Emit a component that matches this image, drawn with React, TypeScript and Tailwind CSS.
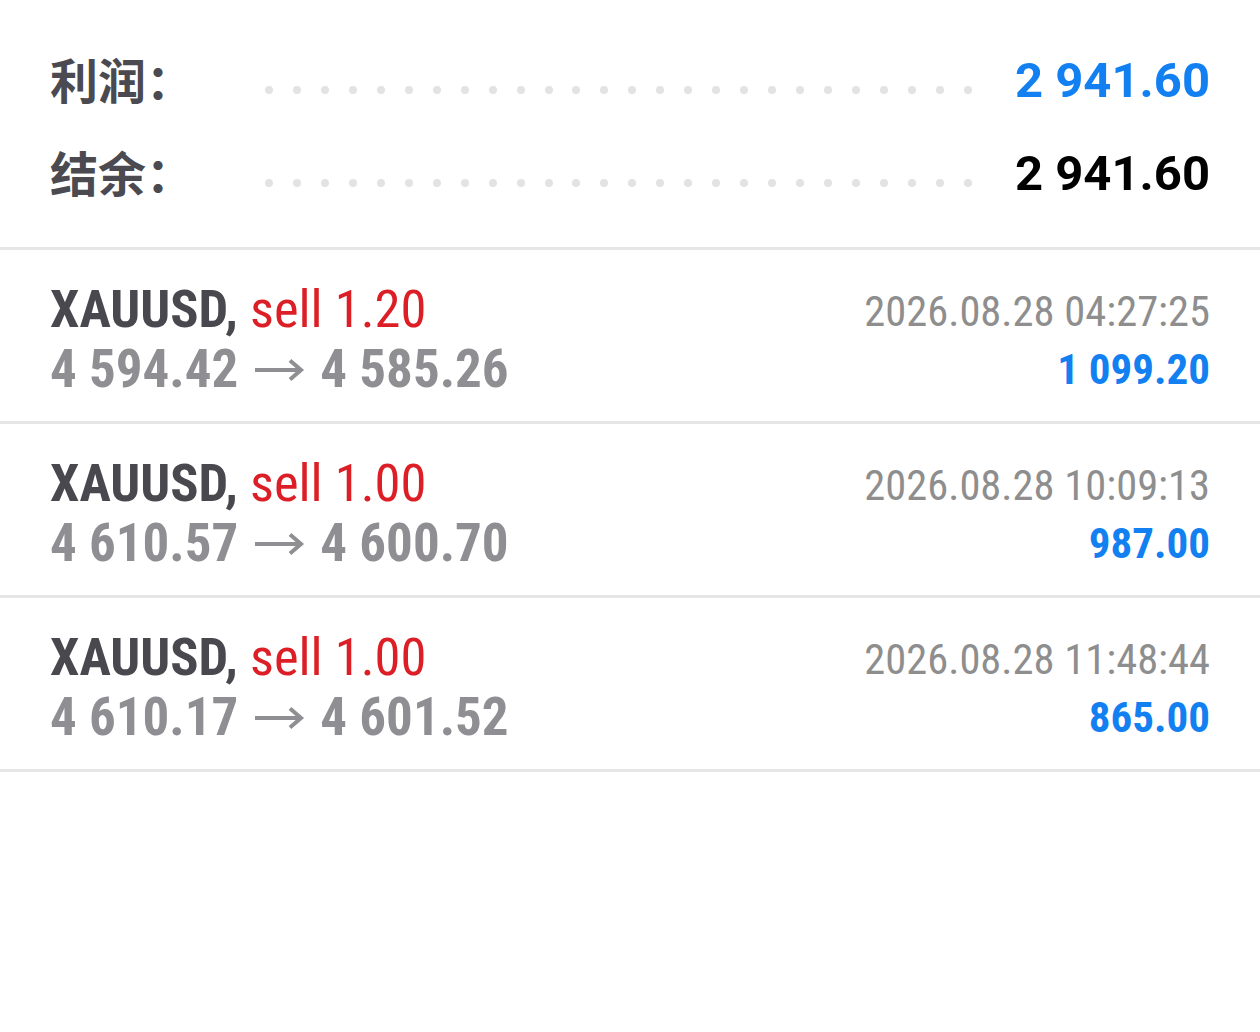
import React from "react";

const trades = [
  { sym: "XAUUSD", side: "sell 1.20", open: "4 594.42", close: "4 585.26", time: "2026.08.28 04:27:25", profit: "1 099.20" },
  { sym: "XAUUSD", side: "sell 1.00", open: "4 610.57", close: "4 600.70", time: "2026.08.28 10:09:13", profit: "987.00" },
  { sym: "XAUUSD", side: "sell 1.00", open: "4 610.17", close: "4 601.52", time: "2026.08.28 11:48:44", profit: "865.00" },
];

const cond = { fontFamily: '"Roboto Condensed", Roboto, sans-serif' };

function Dots() {
  return (
    <div className="flex items-center justify-between w-[707px] mt-[18px]">
      {Array.from({ length: 26 }).map((_, i) => (
        <span key={i} className="block w-[8px] h-[8px] rounded-full bg-[#e3e3e3]" />
      ))}
    </div>
  );
}

function SummaryRow({ label, value, color }: { label: string; value: string; color: string }) {
  return (
    <div className="flex items-center h-[93px]">
      <div
        className="w-[215px] text-[48px] font-bold text-[#4a4a50] leading-none -mt-[6px] whitespace-nowrap"
        style={{ fontFamily: '"Noto Sans CJK SC", sans-serif' }}
      >
        {label}
      </div>
      <Dots />
      <div className={`flex-1 text-right text-[49px] font-bold leading-none ${color}`} style={{ fontFamily: "Roboto, sans-serif" }}>
        {value}
      </div>
    </div>
  );
}

function Arrow() {
  return (
    <svg width="52" height="24" viewBox="0 0 52 24" className="inline-block mx-[15px] align-middle -mt-[6px]">
      <path d="M2 12 H48 M37 2.5 L48 12 L37 21.5" fill="none" stroke="#8e8e93" strokeWidth="4" strokeLinecap="butt" strokeLinejoin="miter" />
    </svg>
  );
}

export default function App() {
  return (
    <div className="w-[1260px] h-[1032px] bg-white overflow-hidden">
      <div className="px-[50px] pt-[34px] pb-[27px]">
        <SummaryRow label="利润：" value="2 941.60" color="text-[#1380f2]" />
        <SummaryRow label="结余：" value="2 941.60" color="text-black" />
      </div>
      <div className="border-t-[3px] border-[#e6e6e6]">
        {trades.map((t, i) => (
          <div key={i} className="h-[174px] border-b-[3px] border-[#e6e6e6] px-[50px] flex justify-between items-start pt-[29px]" style={cond}>
            <div className="flex flex-col">
              <div className="text-[52.5px] leading-[60px]">
                <span className="font-bold text-[#48484e]">{t.sym},</span>{" "}
                <span className="text-[#dc1f26]">{t.side}</span>
              </div>
              <div className="text-[53px] leading-[60px] font-bold text-[#8e8e93] whitespace-nowrap">
                {t.open}
                <Arrow />
                {t.close}
              </div>
            </div>
            <div className="flex flex-col items-end pt-[5px]">
              <div className="text-[42.5px] leading-[56px] text-[#8e8e8e]">{t.time}</div>
              <div className="text-[43px] leading-[58px] font-bold text-[#1380f2]">{t.profit}</div>
            </div>
          </div>
        ))}
      </div>
    </div>
  );
}
